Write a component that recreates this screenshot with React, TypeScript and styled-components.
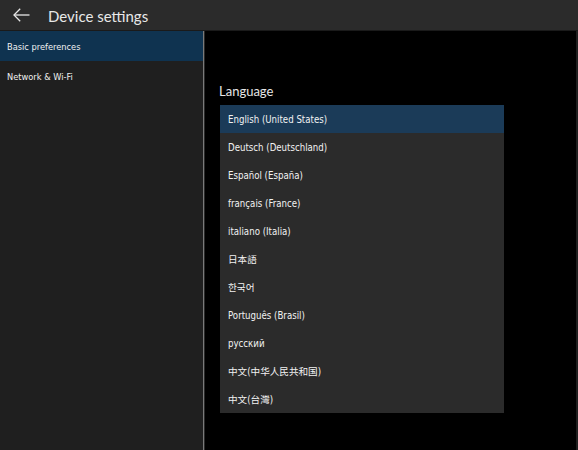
import { createGlobalStyle } from 'styled-components';
import styled from 'styled-components';

const GlobalStyle = createGlobalStyle`
    html, body {
        margin: 0;
        padding: 0;
        background: #000;
    }
    body {
        font-family: "DejaVu Sans Condensed", "DejaVu Sans", "Noto Sans CJK SC", sans-serif;
    }
`

const languages = [
    'English (United States)',
    'Deutsch (Deutschland)',
    'Español (España)',
    'français (France)',
    'italiano (Italia)',
    '日本語',
    '한국어',
    'Português (Brasil)',
    'русский',
    '中文(中华人民共和国)',
    '中文(台灣)',
];

const sections = ['Basic preferences', 'Network & Wi-Fi'];

export default function App() {
    return (
        <>
            <GlobalStyle />
            <Page>
                <Header>
                    <BackButton aria-label="Back">
                        <svg width="17" height="14" viewBox="0 0 17 14" fill="none" stroke="#e6e6e6" strokeWidth="1.3">
                            <path d="M16.5 7H1.2" />
                            <path d="M7.2 0.8L1 7l6.2 6.2" />
                        </svg>
                    </BackButton>
                    <Title>Device settings</Title>
                </Header>
                <Body>
                    <Sidebar>
                        {sections.map((s, i) => (
                            <NavItem key={s} $active={i === 0}>{s}</NavItem>
                        ))}
                    </Sidebar>
                    <Divider />
                    <Content>
                        <SectionTitle>Language</SectionTitle>
                        <LangList>
                            {languages.map((l, i) => (
                                <LangRow key={l} $selected={i === 0}>{l}</LangRow>
                            ))}
                        </LangList>
                    </Content>
                    <Scrollbar />
                </Body>
            </Page>
        </>
    );
}

const Page = styled.div`
    width: 578px;
    height: 450px;
    display: flex;
    flex-direction: column;
    background: #000;
    overflow: hidden;
`

const Header = styled.div`
    height: 30px;
    flex-shrink: 0;
    display: flex;
    align-items: center;
    background: #2b2b2b;
    border-bottom: 1px solid #1a1a1a;
`

const BackButton = styled.div`
    width: 48px;
    height: 30px;
    display: flex;
    align-items: center;
    padding-left: 13px;
    box-sizing: border-box;
`

const Title = styled.div`
    color: #e8e8e8;
    font-family: Lato, sans-serif;
    font-size: 15px;
    line-height: 30px;
    margin-top: 1px;
`

const Body = styled.div`
    flex: 1;
    display: flex;
    min-height: 0;
`

const Sidebar = styled.div`
    width: 203px;
    flex-shrink: 0;
    background: #1f1f1f;
    display: flex;
    flex-direction: column;
`

const NavItem = styled.div<{ $active?: boolean }>`
    height: 30px;
    line-height: 31px;
    padding-left: 7px;
    font-size: 9.2px;
    color: #f0f0f0;
    background: ${p => p.$active ? '#0f3350' : 'transparent'};
`

const Divider = styled.div`
    width: 1px;
    background: #7a7a7a;
    border-right: 1px solid #2a2a2a;
    flex-shrink: 0;
`

const Content = styled.div`
    flex: 1;
    padding: 51px 0 0 14px;
    display: flex;
    flex-direction: column;
`

const SectionTitle = styled.div`
    color: #e6e6e6;
    font-family: Lato, sans-serif;
    font-size: 13px;
    line-height: 18px;
    margin-bottom: 5px;
`

const LangList = styled.div`
    width: 284px;
    margin-left: 1px;
    background: #2b2b2b;
    display: flex;
    flex-direction: column;
`

const LangRow = styled.div<{ $selected?: boolean }>`
    height: 28px;
    line-height: 30px;
    padding-left: 8px;
    font-size: 9.6px;
    color: #f2f2f2;
    background: ${p => p.$selected ? '#1b3b58' : 'transparent'};
`

const Scrollbar = styled.div`
    width: 2px;
    background: #1f1f1f;
    flex-shrink: 0;
`
